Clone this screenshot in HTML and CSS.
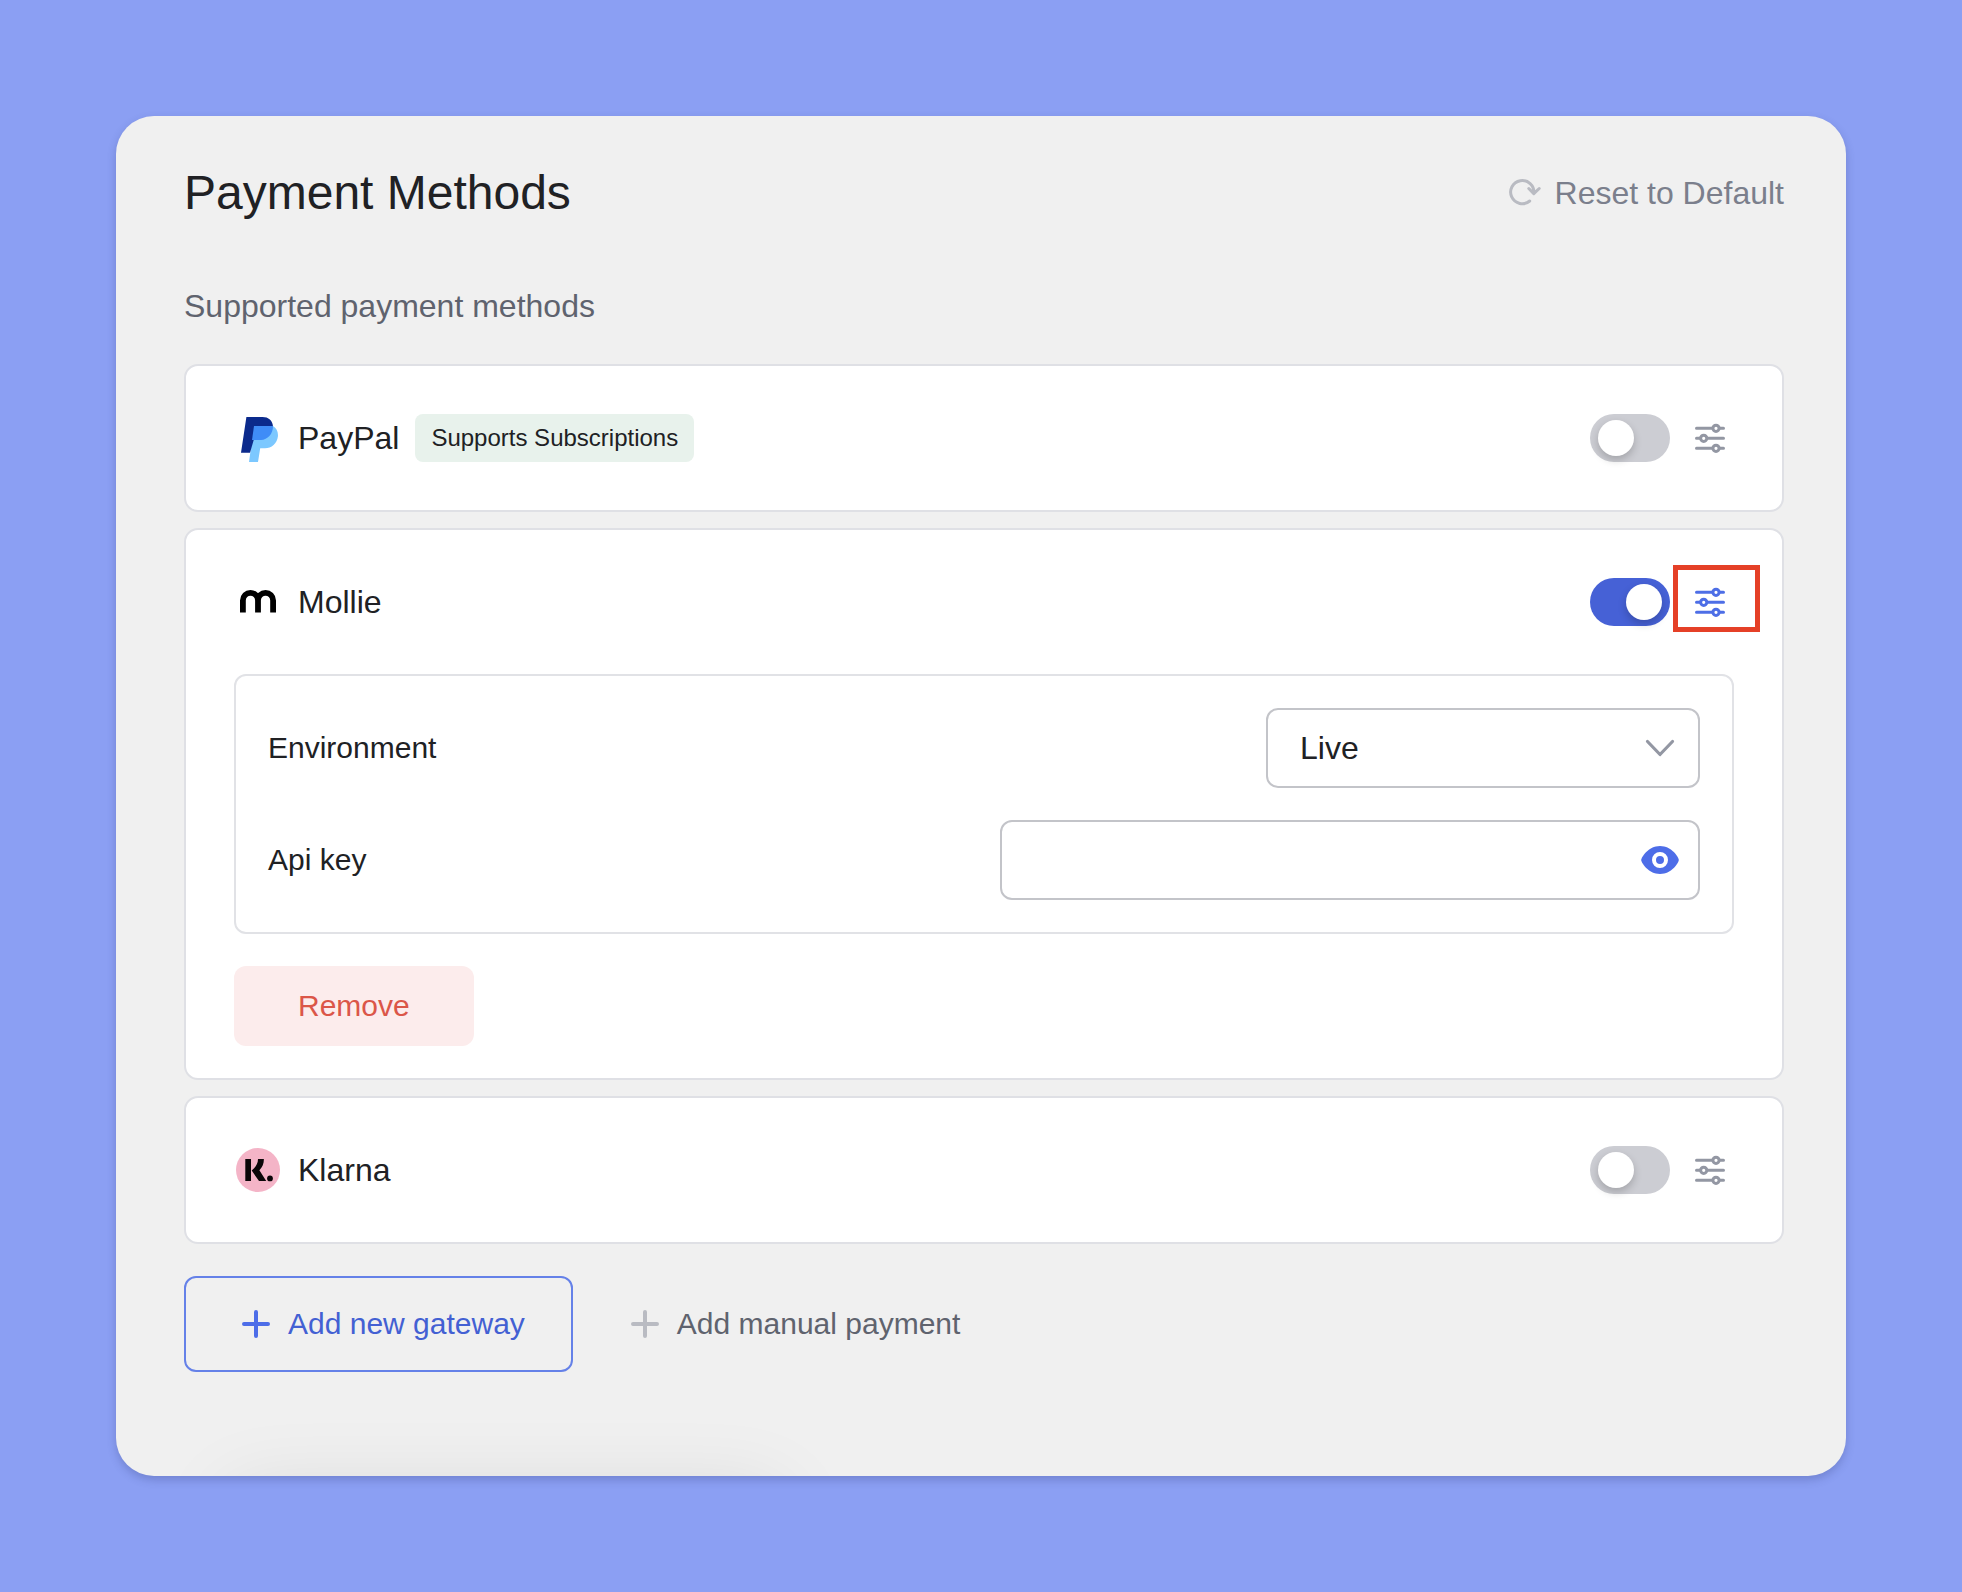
FILE: index.html
```html
<!DOCTYPE html>
<html lang="en">
<head>
<meta charset="utf-8">
<meta name="viewport" content="width=device-width, initial-scale=1">
<title>Payment Methods</title>
<link rel="stylesheet" href="styles.css">
</head>
<body>
<svg class="sprite" aria-hidden="true">
  <symbol id="sliders" viewBox="0 0 48 48">
    <g fill="none" stroke="currentColor" stroke-width="3" stroke-linecap="round">
      <path d="M10.5 14.300H26.600M33.400 14.300H37.500M10.500 24.300H14.600M21.400 24.300H37.500M10.500 34.300H26.600M33.400 34.300H37.500"/>
      <circle cx="30" cy="14.300" r="3.100"/>
      <circle cx="17.700" cy="24.300" r="3.100"/>
      <circle cx="30" cy="34.300" r="3.100"/>
    </g>
  </symbol>
  <symbol id="plus" viewBox="0 0 48 48">
    <path d="M24 12V36M12 24H36" fill="none" stroke="currentColor" stroke-width="4" stroke-linecap="round"/>
  </symbol>
</svg>
<main class="panel">
  <header class="panel-header">
    <h1 class="title">Payment Methods</h1>
    <button class="reset" type="button">
      <svg class="reset-icon" viewBox="0 0 36 36" aria-hidden="true">
        <path d="M22.700 26A11.600 11.600 0 1 1 26.800 18.200M21.800 13.500L26.800 18.700L32.200 13.500" fill="none" stroke="currentColor" stroke-width="3" stroke-linecap="round" stroke-linejoin="round"/>
      </svg>
      <span>Reset to Default</span>
    </button>
  </header>
  <h2 class="subtitle">Supported payment methods</h2>

  <div class="methods">
    <section class="card">
      <div class="card-row">
        <svg class="logo" viewBox="0 0 48 48" aria-hidden="true">
          <path fill="#7cc8ff" d="M20 12H39C42.600 14.200 44.400 18 43.900 22.500C43.100 29.500 37.500 34.300 31 34.300H26.200L24 48H15Z"/>
          <path fill="#0b2a8c" d="M12.400 3H28.500C34.500 3 38.600 6.400 39 12.400L20 25L16 38.700H7Z"/>
          <path fill="#3f8cf7" d="M20 12H39C39 20 33.500 25.900 27 25.900H18Z"/>
        </svg>
        <label class="name" for="paypal">PayPal</label>
        <span class="badge">Supports Subscriptions</span>
        <input class="toggle" type="checkbox" id="paypal">
        <button class="settings" type="button" aria-label="PayPal settings"><svg class="icon"><use href="#sliders"/></svg></button>
      </div>
    </section>

    <section class="card card-open">
      <div class="card-row">
        <svg class="logo" viewBox="0 0 48 48" aria-hidden="true">
          <path fill="none" stroke="#000" stroke-width="5.800" d="M8.900 34.500V22.400A7.550 7.550 0 0 1 24 22.400V34.500M24 22.400A7.550 7.550 0 0 1 39.100 22.400V34.500"/>
        </svg>
        <label class="name" for="mollie">Mollie</label>
        <input class="toggle" type="checkbox" id="mollie" checked>
        <button class="settings settings-active" type="button" aria-label="Mollie settings"><svg class="icon"><use href="#sliders"/></svg></button>
      </div>
      <div class="fields">
        <div class="field">
          <label for="environment">Environment</label>
          <div class="control control-select">
            <select class="box" id="environment"><option>Live</option><option>Test</option></select>
            <svg class="chevron icon" viewBox="0 0 48 48" aria-hidden="true"><path d="M11.500 17.500L24 30.500L36.500 17.500" fill="none" stroke="currentColor" stroke-width="3.200" stroke-linecap="round" stroke-linejoin="round"/></svg>
          </div>
        </div>
        <div class="field">
          <label for="api-key">Api key</label>
          <div class="control control-input">
            <input class="box" type="password" id="api-key">
            <button class="reveal" type="button" aria-label="Show key">
              <svg class="icon" viewBox="0 0 48 48"><path fill="currentColor" d="M5.200 24C5.200 21.500 12.200 10 24 10S42.800 21.500 42.800 24S35.800 38 24 38S5.200 26.500 5.200 24Z"/><circle cx="24" cy="24" r="6" fill="none" stroke="#fff" stroke-width="4"/></svg>
            </button>
          </div>
        </div>
      </div>
      <button class="remove" type="button">Remove</button>
    </section>

    <section class="card">
      <div class="card-row">
        <svg class="logo" viewBox="0 0 48 48" aria-hidden="true">
          <circle cx="24" cy="24" r="22" fill="#f4b4c7"/>
          <path fill="#0b0608" d="M11.300 13H17V35H11.300ZM24 13H29.900C29.900 17.600 28.400 21.300 25.400 24.200L32.200 35H25L17.700 24.600C21.600 21.300 24 17.700 24 13Z"/>
          <circle cx="36" cy="32.400" r="2.900" fill="#0b0608"/>
        </svg>
        <label class="name" for="klarna">Klarna</label>
        <input class="toggle" type="checkbox" id="klarna">
        <button class="settings" type="button" aria-label="Klarna settings"><svg class="icon"><use href="#sliders"/></svg></button>
      </div>
    </section>
  </div>

  <div class="actions">
    <button class="action action-primary" type="button"><svg class="icon"><use href="#plus"/></svg>Add new gateway</button>
    <button class="action" type="button"><svg class="icon"><use href="#plus"/></svg>Add manual payment</button>
  </div>
</main>
</body>
</html>
```
FILE: styles.css
```css
*,
*::before,
*::after {
  box-sizing: border-box;
}

body {
  margin: 0;
  padding: 116px;
  background: #8b9ff3;
  color: #202124;
  font-family: "Liberation Sans", Arial, sans-serif;
  font-size: 32px;
  line-height: 44px;
}

button,
input,
select {
  margin: 0;
  padding: 0;
  border: 0;
  background: none;
  color: inherit;
  font: inherit;
}

button {
  cursor: pointer;
}

.sprite {
  position: absolute;
  width: 0;
  height: 0;
}

.icon,
.logo {
  display: block;
  flex: none;
  width: 48px;
  height: 48px;
}

.panel {
  position: relative;
  overflow: hidden;
  padding: 48px 62px 104px 68px;
  border-radius: 38px;
  background: #f0f0f0;
  box-shadow: 0 4px 8px rgba(40, 50, 110, 0.25);
}

.panel::after {
  content: "";
  position: absolute;
  top: 100%;
  left: 114px;
  width: 550px;
  height: 120px;
  box-shadow: 0 16px 80px rgba(0, 0, 0, 0.1);
}

.panel-header {
  display: flex;
  align-items: center;
  justify-content: space-between;
  height: 58px;
  margin-bottom: 62px;
}

.title {
  margin: 0;
  font-size: 48px;
  font-weight: 400;
  line-height: 56px;
}

.reset {
  display: flex;
  align-items: center;
  gap: 12px;
  color: #7b7f8c;
}

.reset-icon {
  width: 36px;
  height: 36px;
  color: #b9bbc2;
}

.subtitle {
  margin: 0 0 36px;
  color: #5f636e;
  font-size: 32px;
  font-weight: 400;
}

.methods {
  display: flex;
  flex-direction: column;
  gap: 16px;
}

.card {
  padding: 48px;
  border: 2px solid #dfe0e5;
  border-radius: 14px;
  background: #fff;
}

.card-open {
  padding-bottom: 32px;
}

.card-row {
  display: flex;
  align-items: center;
  gap: 16px;
  height: 48px;
}

.badge {
  padding: 0 16px;
  border-radius: 8px;
  background: #e8f2ec;
  font-size: 24px;
  line-height: 48px;
}

.toggle {
  flex: none;
  width: 80px;
  height: 48px;
  margin-left: auto;
  padding: 6px 8px;
  border-radius: 24px;
  background: #cccdd3;
  appearance: none;
  cursor: pointer;
}

.toggle::before {
  content: "";
  display: block;
  width: 36px;
  height: 36px;
  border-radius: 50%;
  background: #fff;
  box-shadow: 0 4px 8px rgba(0, 0, 0, 0.2);
}

.toggle:checked {
  background: #4661d6;
}

.toggle:checked::before {
  margin-left: auto;
}

.settings {
  position: relative;
  width: 48px;
  height: 48px;
  color: #9397a3;
}

.settings-active {
  color: #4d6ee6;
}

.settings-active::after {
  content: "";
  position: absolute;
  top: -13px;
  left: -13px;
  width: 87px;
  height: 67px;
  border: 5px solid #e54027;
}

.fields {
  display: flex;
  flex-direction: column;
  gap: 32px;
  margin: 48px 0 32px;
  padding: 32px;
  border: 2px solid #e1e2e6;
  border-radius: 12px;
  font-size: 30px;
}

.field {
  display: flex;
  align-items: center;
  justify-content: space-between;
}

.control {
  position: relative;
}

.control-select {
  width: 434px;
}

.control-input {
  width: 700px;
}

.box {
  display: block;
  width: 100%;
  height: 80px;
  padding: 0 80px 0 32px;
  border: 2px solid #c3c4c9;
  border-radius: 12px;
  background: #fff;
  font-size: 32px;
  appearance: none;
}

.chevron,
.reveal {
  position: absolute;
  top: 16px;
  right: 16px;
}

.chevron {
  color: #9397a3;
  pointer-events: none;
}

.reveal {
  color: #4d6de8;
}

.remove {
  display: block;
  height: 80px;
  padding: 0 64px;
  border-radius: 12px;
  background: #fcecec;
  color: #db5648;
  font-size: 30px;
}

.actions {
  display: flex;
  margin-top: 32px;
}

.action {
  display: flex;
  align-items: center;
  gap: 8px;
  height: 96px;
  padding: 0 46px;
  border: 2px solid transparent;
  border-radius: 12px;
  color: #5f636e;
  font-size: 30px;
}

.action .icon {
  color: #b9bbc2;
}

.action-primary {
  border-color: #6581e8;
  color: #4360d3;
}

.action-primary .icon {
  color: #4d6de8;
}
```
